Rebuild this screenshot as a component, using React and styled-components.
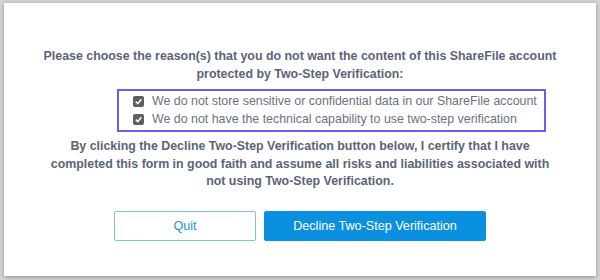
import styled, { createGlobalStyle } from "styled-components";

const GlobalStyle = createGlobalStyle`
  html, body {
    margin: 0;
    padding: 0;
    background: #d4d4d4;
  }
  body {
    width: 600px;
    height: 280px;
    overflow: hidden;
    font-family: "Liberation Sans", Arial, sans-serif;
  }
`;

const Modal = styled.div`
  box-sizing: border-box;
  margin: 3px 4px 0;
  width: 592px;
  height: 273px;
  background: #fff;
  box-shadow: 0 1px 4px rgba(0, 0, 0, 0.35);
  padding-top: 45px;
  display: flex;
  flex-direction: column;
`;

const Prompt = styled.p`
  margin: 0;
  text-align: center;
  font-size: 12.4px;
  line-height: 17.5px;
  font-weight: bold;
  color: #5a6477;
  white-space: nowrap;
`;

const ReasonBox = styled.div`
  box-sizing: border-box;
  width: 429px;
  margin: 6px 0 6px 113px;
  border: 2px solid #6a5cf2;
  padding: 1px 0 2px 14px;
  display: flex;
  flex-direction: column;
`;

const Reason = styled.label`
  display: flex;
  align-items: center;
  gap: 8px;
  height: 18px;
  font-size: 12.4px;
  color: #6a7282;
  white-space: nowrap;
`;

const Check = styled.span`
  width: 11px;
  height: 11px;
  border-radius: 2px;
  background: #5e5e5e;
  display: flex;
  align-items: center;
  justify-content: center;
  flex-shrink: 0;
`;

const Actions = styled.div`
  display: flex;
  justify-content: center;
  gap: 8px;
  margin-top: 20px;
`;

const Button = styled.button`
  box-sizing: border-box;
  height: 30px;
  width: ${(p) => (p.$primary ? "222px" : "142px")};
  border-radius: 2px;
  font-family: "Liberation Sans", Arial, sans-serif;
  font-size: 12.6px;
  cursor: pointer;
  border: 1px solid ${(p) => (p.$primary ? "#0b8fdf" : "#7fc1ee")};
  background: ${(p) => (p.$primary ? "#0b8fdf" : "#fff")};
  color: ${(p) => (p.$primary ? "#fff" : "#1e90dd")};
`;

const reasons = [
  "We do not store sensitive or confidential data in our ShareFile account",
  "We do not have the technical capability to use two-step verification",
];

const CheckMark = () => (
  <svg width="9" height="9" viewBox="0 0 10 10">
    <path d="M2 5.2 L4.2 7.4 L8.2 2.6" fill="none" stroke="#fff" strokeWidth="1.8" />
  </svg>
);

export default function App() {
  return (
    <>
      <GlobalStyle />
      <Modal>
        <Prompt>
          Please choose the reason(s) that you do not want the content of this ShareFile account
          <br />
          protected by Two-Step Verification:
        </Prompt>
        <ReasonBox>
          {reasons.map((r) => (
            <Reason key={r}>
              <Check>
                <CheckMark />
              </Check>
              {r}
            </Reason>
          ))}
        </ReasonBox>
        <Prompt>
          By clicking the Decline Two-Step Verification button below, I certify that I have
          <br />
          completed this form in good faith and assume all risks and liabilities associated with
          <br />
          not using Two-Step Verification.
        </Prompt>
        <Actions>
          <Button>Quit</Button>
          <Button $primary>Decline Two-Step Verification</Button>
        </Actions>
      </Modal>
    </>
  );
}
